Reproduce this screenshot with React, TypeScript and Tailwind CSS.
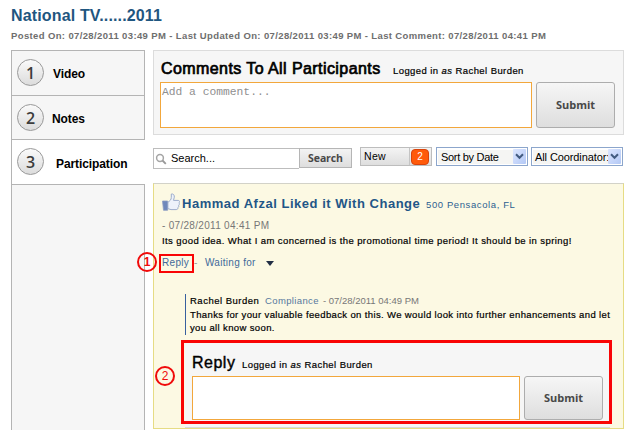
import React from "react";

const sans = "font-['Liberation_Sans',Arial,sans-serif]";
const humanist = "font-['Open_Sans',sans-serif]";

function NavItem({ n, label, className, labelClass }: { n: number; label: string; className: string; labelClass: string }) {
  return (
    <div className={`flex border-l border-[#b4b4b4] pl-[5px] pt-[8px] ${className}`}>
      <div
        className={`flex h-[27px] w-[27px] shrink-0 items-center justify-center rounded-full border-[1.5px] border-[#999] bg-gradient-to-b from-[#fafafa] to-[#dcdcdc] text-[16px] font-semibold text-[#3c3c3c] ${humanist}`}
      >
        {n}
      </div>
      <span className={`text-[12px] font-bold leading-[14px] tracking-[-0.1px] text-black ${labelClass}`}>{label}</span>
    </div>
  );
}

function SubmitButton({ className }: { className: string }) {
  return (
    <button
      className={`shrink-0 rounded-[3px] border border-[#adadad] bg-gradient-to-b from-[#f6f6f6] to-[#dedede] text-[11px] font-bold text-[#484848] ${humanist} ${className}`}
    >
      Submit
    </button>
  );
}

function SelectBox({ label, className, labelClass }: { label: string; className: string; labelClass: string }) {
  return (
    <div className={`flex h-[19px] items-center border border-[#8ca6cc] bg-white p-[1px] text-black ${className}`}>
      <span className={`h-[14px] min-w-0 flex-1 whitespace-nowrap bg-[#f5f5f3] text-[11px] leading-[14px] ${labelClass}`}>{label}</span>
      <span className="flex h-[15px] w-[13px] shrink-0 items-center justify-center rounded-[1px] bg-gradient-to-br from-[#dce6ff] to-[#b3c8f5]">
        <svg width="9" height="7" viewBox="0 0 9 7">
          <path d="M1 1.3 4.5 4.8 8 1.3" fill="none" stroke="#425b80" strokeWidth="2" />
        </svg>
      </span>
    </div>
  );
}

function ThumbUp() {
  return (
    <svg width="18" height="19" viewBox="0 0 18 19" className="shrink-0">
      <path d="M5.8 9.3C7.6 8.3 9.4 6.6 9.3 4.4L9.3 1C11.4.5 12.6 2.3 12.3 4.2L11.5 7.4h4.8c1.5.1 1.6 2 .6 2.5.8.6.6 2-.3 2.4.5.8.2 1.8-.7 2.2.3 1.3-.5 2.1-1.7 2.1H9L5.8 15.6Z" fill="#eef2fa" stroke="#9dadcc" strokeWidth="1" />
      <path d="M.5 8H5.6v9.3H1.5Z" fill="#6f88bb" stroke="#8d9dc2" strokeWidth=".8" />
    </svg>
  );
}

function Marker({ n, className }: { n: number; className: string }) {
  return (
    <span className={`absolute flex h-[20px] w-[20px] items-center justify-center rounded-full border-2 border-[#f00a0a] text-[12px] leading-none text-[#f00a0a] ${className}`}>
      {n}
    </span>
  );
}

function LoggedIn() {
  return (
    <span className="text-[9.5px] tracking-[0.42px] [-webkit-text-stroke:0.2px]">
      Logged in <i>as</i> Rachel Burden
    </span>
  );
}

export default function App() {
  return (
    <div className={`relative h-[432px] w-[628px] overflow-hidden whitespace-nowrap bg-white pl-[11px] ${sans}`}>
      <h1 className="h-[24px] pt-[7px] text-[16px] font-bold leading-[18px] tracking-[0.15px] text-[#1f5680]">National TV......2011</h1>
      <p className="h-[26px] pt-[6px] text-[9.5px] font-bold leading-[11px] tracking-[0.37px] text-[#6e6e6e]">
        Posted On: 07/28/2011 03:49 PM - Last Updated On: 07/28/2011 03:49 PM - Last Comment: 07/28/2011 04:41 PM
      </p>

      <div className="flex">
        <nav className="w-[134px] shrink-0">
          <NavItem n={1} label="Video" className="h-[45px] border-r border-t bg-[#f6f6f6]" labelClass="ml-[9px] mt-[8px]" />
          <NavItem n={2} label="Notes" className="h-[45px] border-r border-y bg-[#f6f6f6]" labelClass="ml-[8px] mt-[8px]" />
          <NavItem n={3} label="Participation" className="h-[44px]" labelClass="ml-[12px] mt-[9px]" />
          <div className="h-[246px] border-x border-t border-[#b4b4b4] bg-[#f6f6f6]" />
        </nav>

        <main className="ml-[8px] w-[471px]">
          <section className="h-[85px] border border-[#dcdcdc] bg-[#f6f6f6] pl-[6px] pt-[8px]">
            <div className="flex h-[23px] items-baseline leading-[20px] text-black">
              <h2 className="ml-[1px] w-[232px] text-[16px] tracking-[0.42px] [-webkit-text-stroke:0.7px]">Comments To All Participants</h2>
              <LoggedIn />
            </div>
            <div className="flex">
              <div className="h-[46px] w-[372px] border border-[#f2a73c] bg-white pl-[1px] pt-[3px] font-['Liberation_Mono',monospace] text-[11.3px] leading-[13px] text-[#8f8f8f]">
                Add a comment...
              </div>
              <SubmitButton className="ml-[4px] h-[46px] w-[79px]" />
            </div>
          </section>

          <div className="mt-[12px] flex h-[36px] items-start">
            <div className="mt-[1px] flex h-[21px] w-[146px] items-center border border-r-0 border-[#bdbdbd] bg-white text-[11px] text-black">
              <svg width="12" height="12" viewBox="0 0 12 12" className="ml-[1px]">
                <circle cx="5" cy="5" r="3.4" fill="none" stroke="#a5a5a5" strokeWidth="1.5" />
                <path d="m7.5 7.5 3.3 3.3" stroke="#999" strokeWidth="1.8" />
              </svg>
              <span className="ml-[4px]">Search...</span>
            </div>
            <button className={`mt-[1px] h-[20px] w-[53px] border border-[#b5b5b5] bg-gradient-to-b from-[#f3f3f3] to-[#dedede] text-[10.5px] font-bold leading-[18px] tracking-[-0.1px] text-[#484848] ${humanist}`}>
              Search
            </button>
            <div className="ml-[8px] flex h-[19px] w-[72px] items-center border border-[#bdbdbd] bg-gradient-to-b from-[#f4f4f4] to-[#dedede] pl-[3px] text-[10.5px] text-black">
              <span className="mr-[1px] w-[46px] border-r border-[#c4c4c4] leading-[17px] tracking-[0.3px]">New</span>
              <span className="flex h-[16px] w-[18px] items-center justify-center rounded-[4px] border border-[#d9430b] bg-[#ff5a0a] text-[10px] text-white">2</span>
            </div>
            <SelectBox label="Sort by Date" className="ml-[4px] w-[92px]" labelClass="pl-[3px] tracking-[-0.3px]" />
            <SelectBox label="All Coordinator:" className="ml-[3px] w-[92px]" labelClass="pl-[2px] tracking-[-0.1px]" />
          </div>

          <section className="h-[246px] border border-[#e6dc84] border-t-[#d2d2c8] bg-[#fcf9e3] pl-[8px]">
            <div className="flex h-[33px] items-start pt-[9px]">
              <ThumbUp />
              <div className="flex items-baseline pt-[1px] leading-[20px]">
                <h3 className="ml-[2px] w-[238px] text-[13px] font-bold tracking-[0.52px] text-[#1f5687]">Hammad Afzal Liked it With Change</h3>
                <span className="ml-[6px] text-[9.5px] tracking-[0.6px] text-[#2d5f91]">500 Pensacola, FL</span>
              </div>
            </div>
            <p className="mt-[2px] text-[10px] leading-[14px] tracking-[0.3px] text-[#777]">- 07/28/2011 04:41 PM</p>
            <p className="mt-[1px] text-[9.5px] leading-[14px] tracking-[0.41px] text-black [-webkit-text-stroke:0.2px]">Its good idea. What I am concerned is the promotional time period! It should be in spring!</p>
            <div className="mt-[8px] flex h-[14px] items-center text-[10px] leading-[14px] tracking-[0.3px] text-[#42699a]">
              <span className="w-[32px]">Reply</span>
              <span className="w-[11px] text-[#999]">-</span>
              <span>Waiting for</span>
              <span className="ml-[10px] border-x-[4px] border-t-[5px] border-x-transparent border-t-[#222f45]" />
            </div>

            <article className="ml-[23px] mt-[24px] h-[41px] border-l border-[#38609e] pl-[4px] text-[9.5px] leading-[13px] tracking-[0.37px] text-black">
              <div className="flex">
                <span className="w-[75px] tracking-[0.5px] [-webkit-text-stroke:0.2px]">Rachel Burden</span>
                <span className="w-[58px] text-[#56789e]">Compliance</span>
                <span className="tracking-[0px] text-[#777]">- 07/28/2011 04:49 PM</span>
              </div>
              <p className="mt-[1px] [-webkit-text-stroke:0.2px]">Thanks for your valuable feedback on this. We would look into further enhancements and let<br />you all know soon.</p>
            </article>

            <div className="ml-[23px] mt-[7px] h-[86px] w-[425px] border-b border-[#d8d8d8] bg-[#f6f6f6] pl-[7px] pt-[11px]">
              <div className="flex h-[23px] items-baseline leading-[20px] text-black">
                <h3 className="w-[50px] text-[16px] tracking-[0.5px] [-webkit-text-stroke:0.4px]">Reply</h3>
                <LoggedIn />
              </div>
              <div className="flex">
                <div className="h-[44px] w-[328px] border border-[#f2a73c] bg-white" />
                <SubmitButton className="ml-[4px] h-[44px] w-[79px]" />
              </div>
            </div>
          </section>
        </main>
      </div>

      <span className="absolute left-[159px] top-[254px] h-[19px] w-[35px] border-2 border-[#f90505]" />
      <span className="absolute left-[181px] top-[340px] h-[84px] w-[431px] border-[3px] border-[#f90505]" />
      <Marker n={1} className="left-[137px] top-[252px] font-bold" />
      <Marker n={2} className="left-[155px] top-[366px]" />
    </div>
  );
}
